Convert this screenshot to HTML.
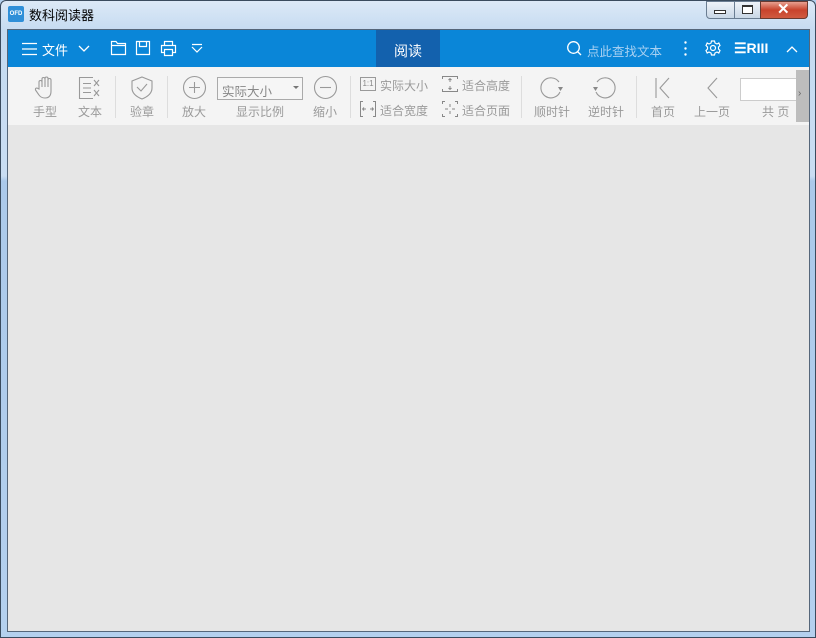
<!DOCTYPE html>
<html><head><meta charset="utf-8"><style>
*{margin:0;padding:0;box-sizing:border-box}
body{width:816px;height:638px;overflow:hidden;position:relative;font-family:"Liberation Sans","Noto Sans CJK SC",sans-serif;background:#b3d0ee}
.a{position:absolute}
.frame{left:0;top:0;width:816px;height:638px;border:1px solid #3a4b5e;border-radius:6px 6px 0 0;background:linear-gradient(#dce9f7 0,#c5dbf1 30px,#c9ddf2 175px,#abc9ea 180px,#b4d0ee 100%)}
.inner{left:7px;top:29px;width:803px;height:603px;border:1px solid #55667a;background:#e6e6e6}
.blue{left:8px;top:30px;width:801px;height:37px;background:#0a86d8}
.gray{left:8px;top:67px;width:801px;height:58px;background:#f4f4f4}
.t{color:#9a9a9a;font-size:12px;white-space:nowrap}
.w{color:#fff;font-size:13px;white-space:nowrap}
.sep{width:1px;height:42px;background:#ddd;top:76px}
svg{position:absolute;overflow:visible}
</style></head><body>
<div class="a frame"></div>
<div class="a" style="left:8px;top:6px;width:16px;height:16px;background:#2f8fd8;border-radius:2px;color:#fff;font-size:6px;line-height:16px;text-align:center;font-weight:bold">OFD</div>
<div class="a" style="left:29px;top:5px;font-size:13px;color:#000">数科阅读器</div>
<!-- window buttons -->
<div class="a" style="left:706px;top:1px;width:29px;height:18px;border:1px solid #6a7d92;border-radius:0 0 0 4px;background:linear-gradient(#eef3f9,#c9d7e6)"></div>
<div class="a" style="left:714px;top:10px;width:12px;height:4px;border:1px solid #333;background:#fff"></div>
<div class="a" style="left:734px;top:1px;width:27px;height:18px;border:1px solid #6a7d92;background:linear-gradient(#eef3f9,#c9d7e6)"></div>
<div class="a" style="left:742px;top:5px;width:11px;height:9px;border:1px solid #333;border-top-width:2px;background:#fff"></div>
<div class="a" style="left:760px;top:1px;width:48px;height:18px;border:1px solid #6a3a30;border-radius:0 0 4px 0;background:linear-gradient(#e8a090,#c8432c 50%,#d05a40)"></div>
<div class="a" style="left:777px;top:0px;color:#fff;font-weight:bold;font-size:15px">✕</div>

<div class="a inner"></div>
<div class="a blue"></div>
<div class="a gray"></div>

<!-- blue bar -->
<svg style="left:22px;top:42px" width="16" height="14"><path d="M0 1.5H15M0 7H15M0 12.5H15" stroke="#fff" stroke-width="1.2"/></svg>
<div class="a w" style="left:42px;top:40px">文件</div>
<svg style="left:78px;top:45px" width="12" height="8"><path d="M1 1L6 6L11 1" stroke="#fff" fill="none" stroke-width="1.3"/></svg>
<svg style="left:111px;top:41px" width="15" height="14"><path d="M0.5 0.5H5L6.5 2.5H14.5V13.5H0.5Z M0.5 4.5H14.5" stroke="#fff" fill="none" stroke-width="1.2"/></svg>
<svg style="left:136px;top:41px" width="14" height="14"><path d="M0.5 0.5H13.5V13.5H0.5Z M3.5 0.5V5.5H10.5V0.5" stroke="#fff" fill="none" stroke-width="1.2"/></svg>
<svg style="left:161px;top:41px" width="15" height="15"><path d="M3.5 4.5V0.5H11.5V4.5 M3.5 11.5H0.5V4.5H14.5V11.5H11.5 M3.5 8.5H11.5V14.5H3.5Z" stroke="#fff" fill="none" stroke-width="1.2"/></svg>
<svg style="left:191px;top:44px" width="12" height="10"><path d="M1 0.5H11 M1 3L6 8L11 3" stroke="#fff" fill="none" stroke-width="1.2"/></svg>
<div class="a" style="left:376px;top:30px;width:64px;height:37px;background:#1361ad"></div>
<div class="a w" style="left:394px;top:41px;font-size:14px">阅读</div>
<svg style="left:567px;top:41px" width="15" height="15"><circle cx="6.5" cy="6.5" r="5.8" stroke="#fff" fill="none" stroke-width="1.3"/><path d="M10.5 10.5L14 14" stroke="#fff" stroke-width="1.3"/></svg>
<div class="a" style="left:587px;top:41px;color:#a9d1f2;font-size:12.5px">点此查找文本</div>
<svg style="left:684px;top:41px" width="3" height="15"><circle cx="1.5" cy="1.5" r="1.2" fill="#fff"/><circle cx="1.5" cy="7.5" r="1.2" fill="#fff"/><circle cx="1.5" cy="13.5" r="1.2" fill="#fff"/></svg>
<svg style="left:705px;top:40px" width="16" height="16"><circle cx="8" cy="8" r="2.5" stroke="#fff" fill="none" stroke-width="1.2"/><path d="M6.5 1H9.5L10 3L12 4L13.8 3L15 5.5L13.5 7V9L15 10.5L13.8 13L12 12L10 13L9.5 15H6.5L6 13L4 12L2.2 13L1 10.5L2.5 9V7L1 5.5L2.2 3L4 4L6 3Z" stroke="#fff" fill="none" stroke-width="1.2"/></svg>
<div class="a" style="left:734px;top:40px;color:#fff;font-weight:bold;font-size:14px">☰RIII</div>
<svg style="left:786px;top:45px" width="12" height="8"><path d="M1 7L6 2L11 7" stroke="#fff" fill="none" stroke-width="1.3"/></svg>

<!-- gray toolbar -->
<svg style="left:34px;top:76px" width="22" height="24"><path d="M5 13V6Q5 4.5 6.5 4.5T8 6V11V3Q8 1.5 9.5 1.5T11 3V11V2.5Q11 1 12.5 1T14 2.5V11V4Q14 2.5 15.5 2.5T17 4V15Q17 22 11 22Q7 22 5 19L1.5 14Q1 12 3 12Z" stroke="#999" fill="none" stroke-width="1.1"/></svg>
<div class="a t" style="left:33px;top:103px">手型</div>
<svg style="left:79px;top:77px" width="22" height="22"><path d="M14 0.5H0.5V21.5H14 M4 6.5H12 M4 11H12 M4 15.5H12 M15 3L20 9 M20 3L15 9 M15 13L20 19 M20 13L15 19" stroke="#999" fill="none" stroke-width="1.1"/></svg>
<div class="a t" style="left:78px;top:103px">文本</div>
<div class="a sep" style="left:115px"></div>
<svg style="left:131px;top:76px" width="22" height="24"><path d="M11 1L21 5V12Q21 19 11 23Q1 19 1 12V5Z M6 11L10 15L16 8" stroke="#999" fill="none" stroke-width="1.1"/></svg>
<div class="a t" style="left:130px;top:103px">验章</div>
<div class="a sep" style="left:167px"></div>
<svg style="left:183px;top:76px" width="24" height="24"><circle cx="11.5" cy="11.5" r="11" stroke="#999" fill="none" stroke-width="1.1"/><path d="M6 11.5H17M11.5 6V17" stroke="#999" stroke-width="1.1"/></svg>
<div class="a t" style="left:182px;top:103px">放大</div>
<div class="a" style="left:217px;top:77px;width:86px;height:23px;border:1px solid #aaa;background:#f6f6f6"></div>
<div class="a t" style="left:222px;top:81px;font-size:12.5px;color:#888">实际大小</div>
<div class="a" style="left:293px;top:86px;border:3px solid transparent;border-top:3px solid #777"></div>
<div class="a t" style="left:236px;top:103px">显示比例</div>
<svg style="left:314px;top:76px" width="24" height="24"><circle cx="11.5" cy="11.5" r="11" stroke="#999" fill="none" stroke-width="1.1"/><path d="M6 11.5H17" stroke="#999" stroke-width="1.1"/></svg>
<div class="a t" style="left:313px;top:103px">缩小</div>
<div class="a sep" style="left:350px"></div>
<div class="a" style="left:360px;top:77px;width:16px;height:14px;border:1px solid #999;font-size:8px;color:#888;text-align:center;line-height:12px">1:1</div>
<div class="a t" style="left:380px;top:77px">实际大小</div>
<svg style="left:360px;top:101px" width="16" height="16"><path d="M3 0.5H0.5V15.5H3 M13 0.5H15.5V15.5H13 M3 8H6M2.5 8L4 6.5M2.5 8L4 9.5 M13 8H10M13.5 8L12 6.5M13.5 8L12 9.5" stroke="#888" fill="none"/></svg>
<div class="a t" style="left:380px;top:102px">适合宽度</div>
<svg style="left:442px;top:76px" width="16" height="16"><path d="M0.5 3V0.5H15.5V3 M0.5 13V15.5H15.5V13 M8 3V6M8 2.5L6.5 4M8 2.5L9.5 4 M8 13V10M8 13.5L6.5 12M8 13.5L9.5 12" stroke="#888" fill="none"/></svg>
<div class="a t" style="left:462px;top:77px">适合高度</div>
<svg style="left:442px;top:101px" width="16" height="16"><path d="M0.5 3V0.5H3 M13 0.5H15.5V3 M0.5 13V15.5H3 M13 15.5H15.5V13 M8 3V6 M8 13V10 M3 8H6 M13 8H10" stroke="#888" fill="none"/></svg>
<div class="a t" style="left:462px;top:102px">适合页面</div>
<div class="a sep" style="left:521px"></div>
<svg style="left:539px;top:76px" width="26" height="24"><path d="M20 6A10 10 0 1 0 21 16" stroke="#999" fill="none" stroke-width="1.1"/><path d="M19 11L21.5 15L24 11Z" fill="#888"/></svg>
<div class="a t" style="left:534px;top:103px">顺时针</div>
<svg style="left:591px;top:76px" width="26" height="24"><path d="M6 6A10 10 0 1 1 5 16" stroke="#999" fill="none" stroke-width="1.1"/><path d="M2 11L4.5 15L7 11Z" fill="#888"/></svg>
<div class="a t" style="left:588px;top:103px">逆时针</div>
<div class="a sep" style="left:636px"></div>
<svg style="left:655px;top:77px" width="16" height="22"><path d="M1 1V21 M14 1L5 11L14 21" stroke="#999" fill="none" stroke-width="1.1"/></svg>
<div class="a t" style="left:651px;top:103px">首页</div>
<svg style="left:703px;top:77px" width="16" height="22"><path d="M14 1L5 11L14 21" stroke="#999" fill="none" stroke-width="1.1"/></svg>
<div class="a t" style="left:694px;top:103px">上一页</div>
<div class="a" style="left:740px;top:78px;width:58px;height:23px;border:1px solid #ccc;background:#fff"></div>
<div class="a t" style="left:762px;top:103px">共 页</div>
<div class="a" style="left:796px;top:70px;width:13px;height:52px;background:#bdbdbd"></div>
<div class="a" style="left:798px;top:88px;color:#666;font-size:10px">›</div>
</body></html>
